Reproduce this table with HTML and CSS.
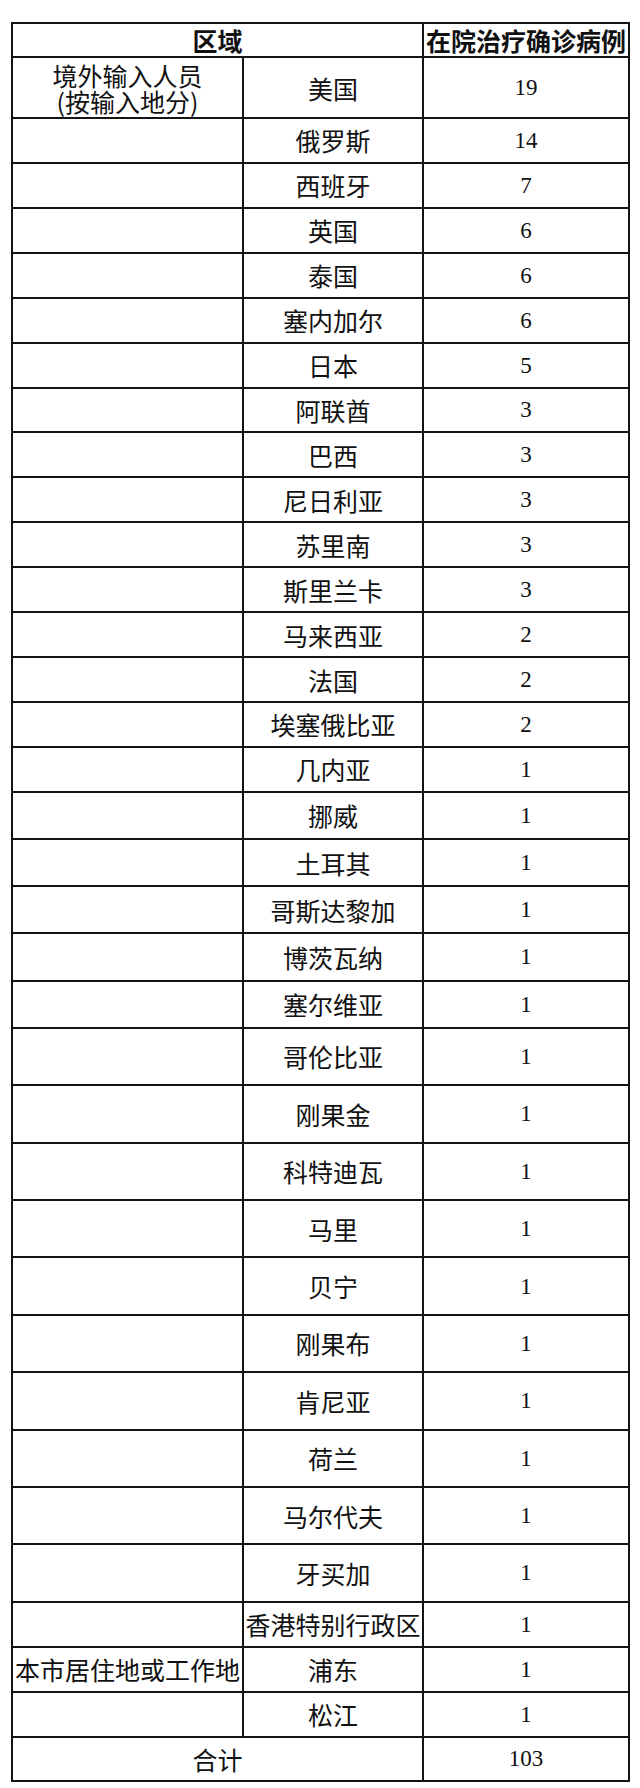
FILE: index.html
```html
<!DOCTYPE html>
<html lang="zh-CN">
<head>
<meta charset="utf-8">
<title>在院治疗确诊病例</title>
<link rel="stylesheet" href="styles.css">
</head>
<body>
<div class="sheet">
  <div class="cell head span2">区域</div>
  <div class="cell head">在院治疗确诊病例</div>

  <div class="cell zh group">境外输入人员<br>(按输入地分)</div><div class="cell zh">美国</div><div class="cell num">19</div>
  <div class="cell"></div><div class="cell zh">俄罗斯</div><div class="cell num">14</div>
  <div class="cell"></div><div class="cell zh">西班牙</div><div class="cell num">7</div>
  <div class="cell"></div><div class="cell zh">英国</div><div class="cell num">6</div>
  <div class="cell"></div><div class="cell zh">泰国</div><div class="cell num">6</div>
  <div class="cell"></div><div class="cell zh">塞内加尔</div><div class="cell num">6</div>
  <div class="cell"></div><div class="cell zh">日本</div><div class="cell num">5</div>
  <div class="cell"></div><div class="cell zh">阿联酋</div><div class="cell num">3</div>
  <div class="cell"></div><div class="cell zh">巴西</div><div class="cell num">3</div>
  <div class="cell"></div><div class="cell zh">尼日利亚</div><div class="cell num">3</div>
  <div class="cell"></div><div class="cell zh">苏里南</div><div class="cell num">3</div>
  <div class="cell"></div><div class="cell zh">斯里兰卡</div><div class="cell num">3</div>
  <div class="cell"></div><div class="cell zh">马来西亚</div><div class="cell num">2</div>
  <div class="cell"></div><div class="cell zh">法国</div><div class="cell num">2</div>
  <div class="cell"></div><div class="cell zh">埃塞俄比亚</div><div class="cell num">2</div>
  <div class="cell"></div><div class="cell zh">几内亚</div><div class="cell num">1</div>
  <div class="cell"></div><div class="cell zh">挪威</div><div class="cell num">1</div>
  <div class="cell"></div><div class="cell zh">土耳其</div><div class="cell num">1</div>
  <div class="cell"></div><div class="cell zh">哥斯达黎加</div><div class="cell num">1</div>
  <div class="cell"></div><div class="cell zh">博茨瓦纳</div><div class="cell num">1</div>
  <div class="cell"></div><div class="cell zh">塞尔维亚</div><div class="cell num">1</div>
  <div class="cell"></div><div class="cell zh">哥伦比亚</div><div class="cell num">1</div>
  <div class="cell"></div><div class="cell zh">刚果金</div><div class="cell num">1</div>
  <div class="cell"></div><div class="cell zh">科特迪瓦</div><div class="cell num">1</div>
  <div class="cell"></div><div class="cell zh">马里</div><div class="cell num">1</div>
  <div class="cell"></div><div class="cell zh">贝宁</div><div class="cell num">1</div>
  <div class="cell"></div><div class="cell zh">刚果布</div><div class="cell num">1</div>
  <div class="cell"></div><div class="cell zh">肯尼亚</div><div class="cell num">1</div>
  <div class="cell"></div><div class="cell zh">荷兰</div><div class="cell num">1</div>
  <div class="cell"></div><div class="cell zh">马尔代夫</div><div class="cell num">1</div>
  <div class="cell"></div><div class="cell zh">牙买加</div><div class="cell num">1</div>
  <div class="cell"></div><div class="cell zh">香港特别行政区</div><div class="cell num">1</div>
  <div class="cell zh">本市居住地或工作地</div><div class="cell zh">浦东</div><div class="cell num">1</div>
  <div class="cell"></div><div class="cell zh">松江</div><div class="cell num">1</div>

  <div class="cell zh span2">合计</div>
  <div class="cell num">103</div>
</div>
</body>
</html>
```

FILE: styles.css
```css
html, body {
  margin: 0;
  padding: 0;
  background: #ffffff;
}

body {
  width: 640px;
  height: 1788px;
}

.sheet {
  margin: 22px 0 0 11px;
  width: 619px;
  box-sizing: border-box;
  display: grid;
  grid-template-columns: 229px 178px 204px;
  grid-template-rows:
    32px 59px
    repeat(15, 42.93px)
    repeat(5, 45.2px)
    repeat(10, 55.4px)
    43px 43px 43px 42px;
  gap: 2px;
  padding: 2px;
  background: #141414;
}

.cell {
  background: #ffffff;
  display: flex;
  align-items: center;
  justify-content: center;
  text-align: center;
  white-space: nowrap;
  color: #111111;
  overflow: visible;
}

.span2 {
  grid-column: span 2;
}

.head {
  font-family: "Noto Sans CJK SC", "Noto Sans", sans-serif;
  font-size: 25px;
  font-weight: 700;
  line-height: 1;
}

.zh {
  font-family: "Noto Sans CJK SC", "Noto Sans", sans-serif;
  font-size: 25px;
  font-weight: 400;
  line-height: 26px;
}

.group {
  line-height: 26px;
}

.num {
  font-family: "Liberation Serif", "Times New Roman", serif;
  font-size: 23px;
  line-height: 1;
}
```
